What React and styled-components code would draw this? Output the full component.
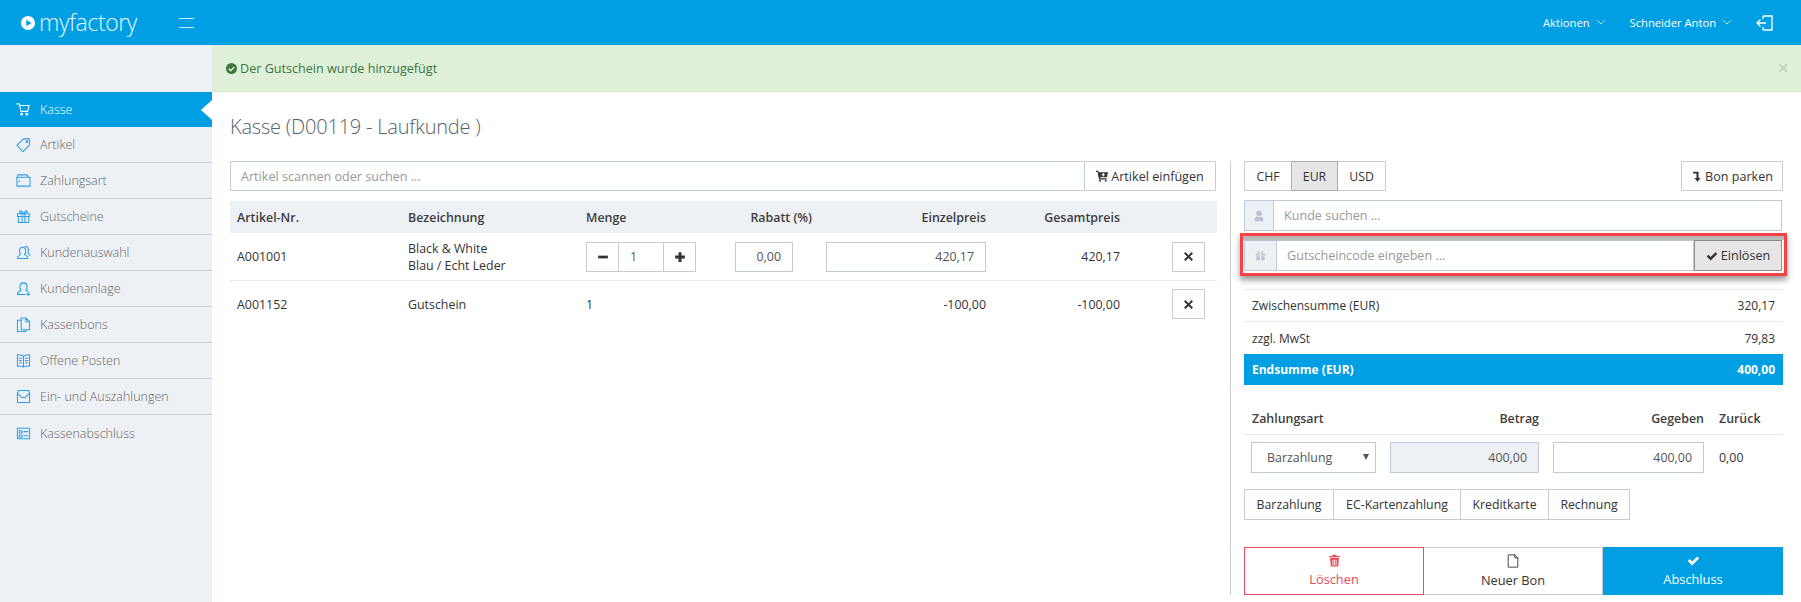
import React from "react";
import styled, { createGlobalStyle } from "styled-components";

const GlobalStyle = createGlobalStyle`
  html, body {
    margin: 0;
    padding: 0;
    background: #fff;
  }
  body {
    font-family: "Open Sans", "Liberation Sans", sans-serif;
    font-size: 12.5px;
    color: #333;
  }
  * {
    box-sizing: border-box;
  }
`;

const Page = styled.div`
  width: 1801px;
  height: 602px;
  overflow: hidden;
  display: flex;
  flex-direction: column;
`;

const TopBar = styled.header`
  height: 45px;
  flex: none;
  background: #009fe3;
  color: #fff;
  display: flex;
  align-items: center;
  padding: 0 28px 0 21px;
`;

const Logo = styled.div`
  display: flex;
  align-items: center;
  gap: 4px;
  font-size: 23px;
  font-weight: 300;
  letter-spacing: -0.4px;
  line-height: 45px;
  color: #e3f5fd;
`;

const Burger = styled.div`
  width: 15px;
  height: 10px;
  margin-left: 42px;
  border-top: 1px solid #d6effa;
  border-bottom: 1px solid #d6effa;
`;

const TopActions = styled.div`
  margin-left: auto;
  display: flex;
  align-items: center;
`;

const TopLink = styled.span`
  display: flex;
  align-items: center;
  gap: 7px;
  font-size: 11.2px;
  margin-right: 25px;
  color: #fff;
`;

const Body = styled.div`
  flex: 1;
  display: flex;
  min-height: 0;
`;

const Sidebar = styled.nav`
  width: 212px;
  flex: none;
  background: #edf1f5;
  padding-top: 47px;
`;

const NavItem = styled.div`
  position: relative;
  height: ${(p) => (p.$active ? "35px" : "36px")};
  display: flex;
  align-items: center;
  gap: 9px;
  padding-left: 16px;
  font-size: 12.5px;
  font-weight: 300;
  background: ${(p) => (p.$active ? "#009fe3" : "transparent")};
  color: ${(p) => (p.$active ? "#fff" : "#666")};
  border-bottom: ${(p) =>
    p.$active || p.$last ? "none" : "1px solid #c9cdd1"};

  svg {
    color: ${(p) => (p.$active ? "#fff" : "#2b9fe6")};
  }

  ${(p) =>
    p.$active &&
    `&::after {
      content: "";
      position: absolute;
      right: 0;
      top: 8px;
      border-style: solid;
      border-width: 10px 11px 10px 0;
      border-color: transparent #fff transparent transparent;
    }`}
`;

const Main = styled.main`
  flex: 1;
  min-width: 0;
  display: flex;
  flex-direction: column;
`;

const Alert = styled.div`
  height: 47px;
  flex: none;
  background: #dff0d8;
  border-bottom: 1px solid #d6e9c6;
  color: #3c763d;
  display: flex;
  align-items: center;
  gap: 3px;
  padding: 0 14px;
  font-size: 12.6px;
`;

const AlertClose = styled.span`
  margin-left: auto;
  margin-right: -2px;
  color: #c4d5be;
  font-size: 20px;
  font-weight: 700;
  line-height: 1;
`;

const Content = styled.div`
  flex: 1;
  min-height: 0;
  padding: 0 18px 7px;
  display: flex;
  flex-direction: column;
`;

const Title = styled.h1`
  margin: 0;
  height: 69px;
  flex: none;
  display: flex;
  align-items: center;
  font-size: 20px;
  font-weight: 300;
  letter-spacing: -0.2px;
  color: #56616c;
`;

const Columns = styled.div`
  flex: 1;
  min-height: 0;
  display: flex;
`;

const LeftPane = styled.section`
  width: 987px;
  flex: none;
`;

const RightPane = styled.section`
  width: 553px;
  margin-left: 13px;
  padding-left: 13px;
  border-left: 1px solid #ccc;
  display: flex;
  flex-direction: column;
`;

const SearchRow = styled.div`
  width: 986px;
  height: 30px;
  display: flex;
`;

const TextInput = styled.div`
  flex: 1;
  display: flex;
  align-items: center;
  padding: 0 10px;
  border: 1px solid #c2c9d9;
  background: #fff;
  color: #999;
  font-size: 12.6px;
`;

const PlainButton = styled.button`
  font: inherit;
  font-size: 12.6px;
  height: 100%;
  width: ${(p) => p.$w}px;
  padding: 0;
  display: inline-flex;
  align-items: center;
  justify-content: center;
  gap: 3px;
  background: #fff;
  color: #333;
  border: 1px solid #ccc;
  border-left: ${(p) => (p.$joined ? "none" : "1px solid #ccc")};
`;

const Grid = styled.div`
  display: grid;
  grid-template-columns: 171px 178px 149px 91px 174px 134px 90px;
  align-items: center;
`;

const TableHead = styled(Grid)`
  height: 32px;
  margin-top: 10px;
  background: #edf1f5;
  font-weight: 600;
  font-size: 12.4px;
  color: #3d3d3d;
`;

const TableRow = styled(Grid)`
  height: ${(p) => (p.$last ? "46px" : "48px")};
  border-bottom: ${(p) => (p.$last ? "none" : "1px solid #e8e8e8")};
  font-size: 12.4px;
  color: #333;
  line-height: 17px;
`;

const Cell = styled.div`
  padding: 0 7px;
  text-align: ${(p) => p.$align || "left"};
`;

const Stepper = styled.div`
  width: 110px;
  height: 30px;
  display: flex;
`;

const StepButton = styled.div`
  width: 33px;
  display: flex;
  align-items: center;
  justify-content: center;
  border: 1px solid #ccc;
  color: #333;
`;

const StepValue = styled.div`
  flex: 1;
  display: flex;
  align-items: center;
  padding-left: 11px;
  border-top: 1px solid #ccc;
  border-bottom: 1px solid #ccc;
  color: #555;
`;

const NumberBox = styled.div`
  width: ${(p) => p.$w}px;
  height: ${(p) => p.$h || 30}px;
  margin-left: ${(p) => p.$ml || 0}px;
  flex: none;
  display: flex;
  align-items: center;
  justify-content: flex-end;
  padding: 0 11px;
  border: 1px solid #c2c9d9;
  background: ${(p) => (p.$disabled ? "#edf1f5" : "#fff")};
  color: #555;
  font-size: 12.4px;
`;

const IconButton = styled.div`
  width: 33px;
  height: 30px;
  margin-left: 38px;
  display: flex;
  align-items: center;
  justify-content: center;
  border: 1px solid #ccc;
  color: #333;
`;

const Toolbar = styled.div`
  height: 30px;
  display: flex;
  justify-content: space-between;
`;

const ButtonGroup = styled.div`
  height: ${(p) => p.$h || 30}px;
  display: flex;
`;

const GroupButton = styled.div`
  width: ${(p) => p.$w}px;
  display: flex;
  align-items: center;
  justify-content: center;
  font-size: 12.3px;
  color: #333;
  border: 1px solid ${(p) => (p.$active ? "#adadad" : "#ccc")};
  background: ${(p) => (p.$active ? "#e6e6e6" : "#fff")};
  margin-left: ${(p) => (p.$first ? "0" : "-1px")};
  position: relative;
  z-index: ${(p) => (p.$active ? 1 : 0)};
`;

const InputGroup = styled.div`
  position: relative;
  height: 31px;
  display: flex;
  margin: ${(p) => p.$mt || 0}px 1px 0 0;
`;

const Addon = styled.div`
  width: ${(p) => p.$w}px;
  flex: none;
  display: flex;
  align-items: center;
  justify-content: center;
  background: #edf1f5;
  border: 1px solid #c2c9d9;
  border-right: none;
  color: #bcc4d1;
`;

const VoucherButton = styled.div`
  width: 88px;
  flex: none;
  display: flex;
  align-items: center;
  justify-content: center;
  gap: 3px;
  background: #e6e6e6;
  border: 1px solid #8f8f8f;
  font-size: 12.6px;
  color: #333;
`;

const Highlight = styled.div`
  position: absolute;
  top: -7px;
  left: -4px;
  right: -5px;
  bottom: -5px;
  border: 3.5px solid #f44246;
  box-shadow: 0 4px 6px rgba(0, 0, 0, 0.4), inset 0 4px 1px rgba(0, 0, 0, 0.28);
  pointer-events: none;
`;

const Totals = styled.div`
  margin-top: 18px;
  border-top: 1px solid #e8e8e8;
`;

const TotalRow = styled.div`
  height: 32px;
  display: flex;
  justify-content: space-between;
  align-items: center;
  padding: 0 8px;
  font-size: 12px;
  color: #333;
  border-bottom: ${(p) => (p.$noLine ? "none" : "1px solid #e8e8e8")};
`;

const GrandTotal = styled(TotalRow)`
  height: 31px;
  background: #009fe3;
  color: #fff;
  font-weight: 700;
  border-bottom: none;
`;

const PayHead = styled.div`
  height: 50px;
  display: grid;
  grid-template-columns: 153px 134px 165px auto;
  align-items: end;
  padding: 0 0 7px 8px;
  border-bottom: 1px solid #e8e8e8;
  font-weight: 600;
  font-size: 12.4px;
  color: #3d3d3d;
`;

const PayCell = styled.div`
  text-align: ${(p) => p.$align || "left"};
  margin-left: ${(p) => p.$ml || 0}px;
`;

const PayRow = styled.div`
  margin-top: 7px;
  padding-left: 7px;
  display: flex;
  align-items: center;
  font-size: 12.4px;
`;

const SelectBox = styled.div`
  width: 125px;
  height: 31px;
  display: flex;
  align-items: center;
  justify-content: space-between;
  padding: 0 6px 0 15px;
  border: 1px solid #c2c9d9;
  color: #555;
  margin-right: 14px;

  &::after {
    content: "";
    border-style: solid;
    border-width: 6px 3px 0 3px;
    border-color: #555 transparent transparent transparent;
    margin-top: -2px;
  }
`;

const ZeroValue = styled.span`
  margin-left: 15px;
  color: #333;
`;

const PayOptions = styled(ButtonGroup)`
  margin-top: 16px;
`;

const Actions = styled.div`
  margin-top: 27px;
  height: 48px;
  display: grid;
  grid-template-columns: 180px 179px 180px;
`;

const toneColor = { danger: "#ea4a5a", primary: "#009fe3" };

const ActionButton = styled.div`
  display: flex;
  flex-direction: column;
  align-items: center;
  justify-content: center;
  gap: 3px;
  font-size: 12.8px;
  border: 1px solid ${(p) => toneColor[p.$tone] || "#ccc"};
  border-left: ${(p) => (p.$tone ? undefined : "none")};
  background: ${(p) => (p.$tone === "primary" ? "#009fe3" : "#fff")};
  color: ${(p) =>
    p.$tone === "danger" ? "#ea4a5a" : p.$tone === "primary" ? "#fff" : "#333"};
`;

const Line = ({ size = 16, children, width = 1.1 }) => (
  <svg width={size} height={size} viewBox="0 0 16 16" fill="none" stroke="currentColor" strokeWidth={width} strokeLinejoin="round" strokeLinecap="round">
    {children}
  </svg>
);

const navIcons = {
  cart: (
    <>
      <path d="M1 2h2.500l1.800 8h7.200l1.500-6.200H4.200" />
      <circle cx="6" cy="13" r="1" />
      <circle cx="11.600" cy="13" r="1" />
    </>
  ),
  tag: (
    <>
      <path d="M1 9l7-7h6.500v6.500l-7 7z" />
      <circle cx="11.600" cy="5" r="1" />
    </>
  ),
  wallet: (
    <>
      <path d="M1 5v9h14V4.500H3z" />
      <path d="M1 5l1-3h10l1 2.500" />
      <path d="M3 9h1" />
    </>
  ),
  gift: (
    <>
      <path d="M1.500 5h13v3h-13zM2.500 8v6.500h11V8M6.500 5v9.500M9.500 5v9.500" />
      <path d="M8 5C6 1 3 1.500 4 3.500 4.500 4.500 6 5 8 5c2 0 3.500-.5 4-1.500C13 1.500 10 1 8 5z" />
    </>
  ),
  users: (
    <>
      <path d="M1.500 14.500c0-3 2-3.500 3.500-4.500-2-2-2-7.500 2-7.500s4 5.500 2 7.500c1.500 1 3.500 1.500 3.500 4.500z" />
      <path d="M9.500 1.500c4-.5 4.500 5 3 7 1 .6 2 1.200 2.300 3" />
    </>
  ),
  userPlus: (
    <>
      <path d="M1.500 14.500c0-3 2-3.500 4-4.500-2.200-2-2.200-8 2.500-8s4.700 6 2.500 8c1 .5 1.700.8 2.400 1.400M1.500 14.500H10" />
      <path d="M13 12.500v3M11.500 14h3" />
    </>
  ),
  copy: (
    <>
      <path d="M5.500 3.500H1.500v12h9V13.500" />
      <path d="M5.500 1h5l4 4v8.500h-9zM10.500 1v4h4" />
    </>
  ),
  book: (
    <>
      <path d="M8 3.500C6 2 3.500 1.500 1.500 2v12c2-.5 4.500 0 6.500 1 2-1 4.500-1.500 6.500-1V2C12.500 1.500 10 2 8 3.500zM8 3.500V15" />
      <path d="M3.500 5.500h2.500M3.500 8h2.500M3.500 10.500h2.500M10 5.500h2.500M10 8h2.500M10 10.500h2.500" />
    </>
  ),
  inbox: (
    <>
      <path d="M1.500 4.500v10h13v-10l-1-3h-11z" />
      <path d="M1.500 4.500L6 9h4l4.500-4.500" />
    </>
  ),
  form: (
    <>
      <path d="M1.500 2.500h13v11h-13z" />
      <path d="M3.500 5h3v2.500h-3zM3.500 9.500h3V12h-3zM8.500 6h4M8.500 10.500h4" />
    </>
  ),
};

const navItems = [
  { label: "Kasse", icon: "cart", active: true },
  { label: "Artikel", icon: "tag" },
  { label: "Zahlungsart", icon: "wallet" },
  { label: "Gutscheine", icon: "gift" },
  { label: "Kundenauswahl", icon: "users" },
  { label: "Kundenanlage", icon: "userPlus" },
  { label: "Kassenbons", icon: "copy" },
  { label: "Offene Posten", icon: "book" },
  { label: "Ein- und Auszahlungen", icon: "inbox" },
  { label: "Kassenabschluss", icon: "form" },
];

const Chevron = () => (
  <svg width="8" height="5" viewBox="0 0 8 5" fill="none" stroke="#bfe6f8" strokeWidth="1">
    <path d="M.5.500L4 4 7.500.500" />
  </svg>
);

const Solid = ({ size = 12, d }) => (
  <svg width={size} height={size} viewBox="0 0 16 16" fill="currentColor" fillRule="evenodd">
    <path d={d} />
  </svg>
);

const CART_PLUS = "M0 1h3l.5 2H16l-1.500 6.500H5.200L5.500 11H14v1.500H4L2 2.500H0zM9 4h1.500v1.500H12V7h-1.500v1.500H9V7H7.500V5.500H9zM5.500 13a1.300 1.300 0 110 2.600 1.300 1.300 0 010-2.600zm7.500 0a1.300 1.300 0 110 2.600 1.300 1.300 0 010-2.600z";
const CROSS = "M3.500 1.500L8 6l4.500-4.500 2 2L10 8l4.500 4.500-2 2L8 10l-4.500 4.500-2-2L6 8 1.500 3.500z";
const PLUS = "M6 1.500h4V6h4.500v4H10v4.500H6V10H1.500V6H6z";
const MINUS = "M1.500 6.200h13v3.600h-13z";
const CHECK = "M1 8.500l2.300-2.300 3 3L12.700 3 15 5.300l-8.700 8.700z";
const USER = "M8 1a3.700 3.700 0 110 7.400A3.700 3.700 0 018 1zM2 15c0-4 1.500-6 3.300-6.300C6 9.300 7 9.700 8 9.700s2-.4 2.700-1C12.500 9 14 11 14 15z";
const GIFT = "M1 5h14v3H9V5H7v3H1zM2 9h5v6H2zM9 9h5v6H9zM8 4.500C6 1 3 .5 3.500 3c.3 1 2 1.500 4.500 1.500zM8 4.500C10 1 13 .5 12.500 3c-.3 1-2 1.500-4.500 1.500z";
const TRASH = "M6 1h4l1 1.500h3.500V4h-13V2.500H5zM2.500 5h11l-1 10.500h-9zM5.500 7v7h1V7zM7.500 7v7h1V7zM9.500 7v7h1V7z";
const LEVEL_DOWN = "M3 1h8v9h3l-4.500 5.500L5 10h3V3.500H3z";

export default function App() {
  return (
    <>
      <GlobalStyle />
      <Page>
        <TopBar>
          <Logo>
            <svg width="14" height="14" viewBox="0 0 16 16">
              <circle cx="8" cy="8" r="8" fill="#fff" />
              <path d="M6 4.200l6 3.800-6 3.800z" fill="#009fe3" />
            </svg>
            myfactory
          </Logo>
          <Burger />
          <TopActions>
            <TopLink>
              Aktionen <Chevron />
            </TopLink>
            <TopLink>
              Schneider Anton <Chevron />
            </TopLink>
            <svg width="17" height="16" viewBox="0 0 17 16" fill="none" stroke="#fff" strokeWidth="1.300">
              <path d="M7 1h9v14H7M7 1v3M7 15v-3M1 8h9M4.500 4.500L1 8l3.500 3.500" />
            </svg>
          </TopActions>
        </TopBar>
        <Body>
          <Sidebar>
            {navItems.map((item, i) => (
              <NavItem key={item.label} $active={item.active} $last={i === navItems.length - 1}>
                <Line size={15}>{navIcons[item.icon]}</Line>
                {item.label}
              </NavItem>
            ))}
          </Sidebar>
          <Main>
            <Alert>
              <svg width="11" height="11" viewBox="0 0 16 16">
                <circle cx="8" cy="8" r="8" fill="#3c763d" />
                <path d="M4 8.200l3 3 5-5.500" fill="none" stroke="#dff0d8" strokeWidth="2.200" />
              </svg>
              Der Gutschein wurde hinzugefügt
              <AlertClose>×</AlertClose>
            </Alert>
            <Content>
              <Title>Kasse (D00119 - Laufkunde )</Title>
              <Columns>
                <LeftPane>
                  <SearchRow>
                    <TextInput>Artikel scannen oder suchen ...</TextInput>
                    <PlainButton $joined $w={131}>
                      <Solid size={12} d={CART_PLUS} />
                      Artikel einfügen
                    </PlainButton>
                  </SearchRow>
                  <TableHead>
                    <Cell>Artikel-Nr.</Cell>
                    <Cell>Bezeichnung</Cell>
                    <Cell>Menge</Cell>
                    <Cell $align="right">Rabatt (%)</Cell>
                    <Cell $align="right">Einzelpreis</Cell>
                    <Cell $align="right">Gesamtpreis</Cell>
                    <Cell />
                  </TableHead>
                  <TableRow>
                    <Cell>A001001</Cell>
                    <Cell>
                      Black &amp; White
                      <br />
                      Blau / Echt Leder
                    </Cell>
                    <Cell>
                      <Stepper>
                        <StepButton>
                          <Solid size={12} d={MINUS} />
                        </StepButton>
                        <StepValue>1</StepValue>
                        <StepButton>
                          <Solid size={12} d={PLUS} />
                        </StepButton>
                      </Stepper>
                    </Cell>
                    <Cell>
                      <NumberBox $w={58}>0,00</NumberBox>
                    </Cell>
                    <Cell>
                      <NumberBox $w={160}>420,17</NumberBox>
                    </Cell>
                    <Cell $align="right">420,17</Cell>
                    <Cell>
                      <IconButton>
                        <Solid size={11} d={CROSS} />
                      </IconButton>
                    </Cell>
                  </TableRow>
                  <TableRow $last>
                    <Cell>A001152</Cell>
                    <Cell>Gutschein</Cell>
                    <Cell>1</Cell>
                    <Cell />
                    <Cell $align="right">-100,00</Cell>
                    <Cell $align="right">-100,00</Cell>
                    <Cell>
                      <IconButton>
                        <Solid size={11} d={CROSS} />
                      </IconButton>
                    </Cell>
                  </TableRow>
                </LeftPane>
                <RightPane>
                  <Toolbar>
                    <ButtonGroup>
                      <GroupButton $first $w={48}>CHF</GroupButton>
                      <GroupButton $active $w={47}>EUR</GroupButton>
                      <GroupButton $w={49}>USD</GroupButton>
                    </ButtonGroup>
                    <PlainButton $w={102}>
                      <Solid size={11} d={LEVEL_DOWN} />
                      Bon parken
                    </PlainButton>
                  </Toolbar>
                  <InputGroup $mt={9}>
                    <Addon $w={29}>
                      <Solid size={12} d={USER} />
                    </Addon>
                    <TextInput>Kunde suchen ...</TextInput>
                  </InputGroup>
                  <InputGroup $mt={9}>
                    <Addon $w={32}>
                      <Solid size={11} d={GIFT} />
                    </Addon>
                    <TextInput>Gutscheincode eingeben ...</TextInput>
                    <VoucherButton>
                      <Solid size={12} d={CHECK} />
                      Einlösen
                    </VoucherButton>
                    <Highlight />
                  </InputGroup>
                  <Totals>
                    <TotalRow>
                      <span>Zwischensumme (EUR)</span>
                      <span>320,17</span>
                    </TotalRow>
                    <TotalRow $noLine>
                      <span>zzgl. MwSt</span>
                      <span>79,83</span>
                    </TotalRow>
                    <GrandTotal>
                      <span>Endsumme (EUR)</span>
                      <span>400,00</span>
                    </GrandTotal>
                  </Totals>
                  <PayHead>
                    <PayCell>Zahlungsart</PayCell>
                    <PayCell $align="right">Betrag</PayCell>
                    <PayCell $align="right">Gegeben</PayCell>
                    <PayCell $ml={15}>Zurück</PayCell>
                  </PayHead>
                  <PayRow>
                    <SelectBox>Barzahlung</SelectBox>
                    <NumberBox $w={149} $h={31} $disabled>400,00</NumberBox>
                    <NumberBox $w={151} $h={31} $ml={14}>400,00</NumberBox>
                    <ZeroValue>0,00</ZeroValue>
                  </PayRow>
                  <PayOptions $h={31}>
                    <GroupButton $first $w={90}>Barzahlung</GroupButton>
                    <GroupButton $w={128}>EC-Kartenzahlung</GroupButton>
                    <GroupButton $w={89}>Kreditkarte</GroupButton>
                    <GroupButton $w={82}>Rechnung</GroupButton>
                  </PayOptions>
                  <Actions>
                    <ActionButton $tone="danger">
                      <Solid size={13} d={TRASH} />
                      Löschen
                    </ActionButton>
                    <ActionButton>
                      <Line size={14} width={1}>
                        <path d="M3 1h7l3.500 3.500V15H3zM10 1v3.500h3.500" />
                      </Line>
                      Neuer Bon
                    </ActionButton>
                    <ActionButton $tone="primary">
                      <Solid size={13} d={CHECK} />
                      Abschluss
                    </ActionButton>
                  </Actions>
                </RightPane>
              </Columns>
            </Content>
          </Main>
        </Body>
      </Page>
    </>
  );
}
